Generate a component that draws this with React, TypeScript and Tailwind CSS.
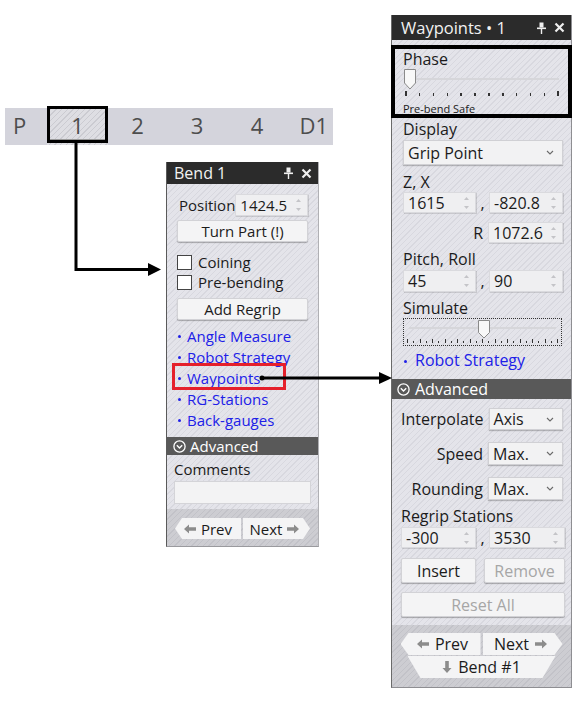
import React from "react";

const hatch =
  "bg-[repeating-linear-gradient(135deg,#e4e4ea_0px,#e4e4ea_3px,#d8d8df_3px,#d8d8df_4px)]";

function Pin() {
  return (
    <svg width="9" height="12" viewBox="0 0 9 12">
      <rect x="2.5" y="0.5" width="4" height="5" fill="#f0f0f0" />
      <rect x="0" y="5.5" width="9" height="1.6" fill="#f0f0f0" />
      <rect x="3.8" y="6" width="1.4" height="6" fill="#f0f0f0" />
    </svg>
  );
}

function Close() {
  return (
    <svg width="11" height="11" viewBox="0 0 11 11">
      <path d="M1.5 1.5 L9.5 9.5 M9.5 1.5 L1.5 9.5" stroke="#f0f0f0" strokeWidth="2.2" />
    </svg>
  );
}

function SpinArrows() {
  return (
    <svg width="7" height="16" viewBox="0 0 7 16" className="shrink-0">
      <path d="M1 5 L3.5 2 L6 5 Z" fill="#c4c4c8" />
      <path d="M1 11 L3.5 14 L6 11 Z" fill="#c4c4c8" />
    </svg>
  );
}

function Chevron() {
  return (
    <svg width="8" height="5" viewBox="0 0 8 5" className="shrink-0">
      <path d="M1 1 L4 4 L7 1" fill="none" stroke="#6a6a6a" strokeWidth="1.1" />
    </svg>
  );
}

function Spin({ value, className = "" }: { value: string; className?: string }) {
  return (
    <div
      className={`flex items-center justify-between bg-[#efeff1] border border-[#dadade] shadow-[1px_1px_0_rgba(0,0,0,0.12)] pl-[4px] pr-[5px] ${className}`}
    >
      <span>{value}</span>
      <SpinArrows />
    </div>
  );
}

function Btn({
  children,
  className = "",
  disabled = false,
}: {
  children: React.ReactNode;
  className?: string;
  disabled?: boolean;
}) {
  return (
    <div
      className={`flex items-center justify-center bg-[#f4f4f5] border border-[#d2d2d6] rounded-[2px] shadow-[0_1px_1px_rgba(0,0,0,0.28)] ${
        disabled ? "text-[#a6a6a6]" : "text-[#1b1b1b]"
      } ${className}`}
    >
      {children}
    </div>
  );
}

function Sel({ value, className = "" }: { value: string; className?: string }) {
  return (
    <div
      className={`flex items-center justify-between bg-[#f2f2f3] border border-[#d0d0d4] shadow-[0_1px_1px_rgba(0,0,0,0.22)] pl-[4px] pr-[8px] ${className}`}
    >
      <span>{value}</span>
      <Chevron />
    </div>
  );
}

function AdvIcon() {
  return (
    <svg width="13" height="13" viewBox="0 0 13 13" className="shrink-0">
      <circle cx="6.5" cy="6.5" r="5.6" fill="none" stroke="#fff" strokeWidth="1.3" />
      <path d="M3.8 5.3 L6.5 8 L9.2 5.3" fill="none" stroke="#fff" strokeWidth="1.4" />
    </svg>
  );
}

function ArrowLeft() {
  return (
    <svg width="12" height="10" viewBox="0 0 12 10" className="shrink-0">
      <path d="M0 5 L5 0.5 V3.2 H12 V6.8 H5 V9.5 Z" fill="#8c8c8c" />
    </svg>
  );
}
function ArrowRight() {
  return (
    <svg width="12" height="10" viewBox="0 0 12 10" className="shrink-0">
      <path d="M12 5 L7 0.5 V3.2 H0 V6.8 H7 V9.5 Z" fill="#8c8c8c" />
    </svg>
  );
}
function ArrowDown() {
  return (
    <svg width="10" height="12" viewBox="0 0 10 12" className="shrink-0">
      <path d="M5 12 L0.5 7 H3.2 V0 H6.8 V7 H9.5 Z" fill="#8c8c8c" />
    </svg>
  );
}

function TabBar() {
  return (
    <div className="absolute left-[5px] top-[108px] w-[328px] h-[37px] bg-[#d4d4dc] flex items-stretch text-[22px] leading-[28px] text-[#4d4d4d]">
      <div className="w-[42px] pl-[8px] flex items-center pb-[3px]">P</div>
      <div className="relative w-[61px] flex items-center justify-center pb-[3px] bg-[repeating-linear-gradient(135deg,#dedee3_0px,#dedee3_3px,#cbcbd1_3px,#cbcbd1_4px)]">
        1
        <div className="absolute left-0 right-0 bottom-[4px] h-[2px] bg-[#9a9a9a]" />
        <div className="absolute left-0 right-0 top-[-2px] bottom-[2px] border-[3px] border-black" />
      </div>
      <div className="w-[59px] flex items-center justify-center pb-[3px]">2</div>
      <div className="w-[60px] flex items-center justify-center pb-[3px]">3</div>
      <div className="w-[60px] flex items-center justify-center pb-[3px]">4</div>
      <div className="flex-1 flex items-center justify-end pr-[5px] pb-[3px]">D1</div>
    </div>
  );
}

function BendPanel() {
  const links = ["Angle Measure", "Robot Strategy", "Waypoints", "RG-Stations", "Back-gauges"];
  return (
    <div className="absolute left-[166px] top-[162px] w-[153px] h-[385px] flex flex-col border-l border-l-[#5a5a5a] border-r border-r-[#b0b0b4] border-b border-b-[#9a9a9e] text-[15px] leading-[20px]">
      <div className="h-[22px] shrink-0 bg-[#2b2b2b] flex items-center justify-between pl-[7px] pr-[6px] text-[#f2f2f2]">
        <span className="text-[16px]">Bend 1</span>
        <div className="flex items-center gap-[8px]">
          <Pin />
          <Close />
        </div>
      </div>
      <div className={`flex-1 flex flex-col ${hatch}`}>
        <div className="px-[10px] flex flex-col">
          <div className="mt-[9px] h-[24px] flex items-center justify-between">
            <span className="pl-[2px]">Position</span>
            <Spin value="1424.5" className="w-[73px] h-[22px]" />
          </div>
          <Btn className="mt-[3px] h-[22px] w-[131px]">Turn Part (!)</Btn>
          <div className="mt-[10px] h-[20px] flex items-center gap-[6px]">
            <div className="w-[15px] h-[15px] bg-white border border-[#444]" />
            <span>Coining</span>
          </div>
          <div className="h-[20px] flex items-center gap-[6px]">
            <div className="w-[15px] h-[15px] bg-white border border-[#444]" />
            <span>Pre-bending</span>
          </div>
          <Btn className="mt-[6px] h-[22px] w-[131px]">Add Regrip</Btn>
          <div className="mt-[5px] flex flex-col">
            {links.map((l) => (
              <div key={l} className="h-[21px] flex items-center text-[#2020e8]">
                <div className="ml-[1px] mr-[6px] w-[3px] h-[3px] rounded-full bg-[#2020e8] mt-[2px]" />
                <span>{l}</span>
              </div>
            ))}
          </div>
        </div>
        <div className="mt-[7px] h-[18px] bg-[#595959] text-white flex items-center gap-[4px] pl-[6px]">
          <AdvIcon />
          <span>Advanced</span>
        </div>
        <div className="px-[7px] flex flex-col">
          <div className="mt-[4px] h-[20px] flex items-center">Comments</div>
          <div className="mt-[2px] h-[23px] bg-[#f3f3f4] border border-[#d4d4d8]" />
        </div>
        <div className="mt-[5px] flex-1 bg-[repeating-linear-gradient(135deg,#cdcdd2_0px,#cdcdd2_3px,#c2c2c8_3px,#c2c2c8_4px)] pt-[9px] flex justify-center gap-[2px]">
          <div className="h-[21px] w-[66px] bg-[#f4f4f5] flex items-center justify-center gap-[5px] [clip-path:polygon(7px_0,100%_0,100%_100%,7px_100%,0_50%)]">
            <ArrowLeft />
            <span>Prev</span>
          </div>
          <div className="h-[21px] w-[67px] bg-[#f4f4f5] flex items-center justify-center gap-[5px] pr-[4px] [clip-path:polygon(0_0,calc(100%-7px)_0,100%_50%,calc(100%-7px)_100%,0_100%)]">
            <span>Next</span>
            <ArrowRight />
          </div>
        </div>
      </div>
    </div>
  );
}

function WaypointsPanel() {
  const ticks12 = Array.from({ length: 12 }, (_, i) => i);
  const ticks25 = Array.from({ length: 25 }, (_, i) => i);
  return (
    <div className="absolute left-[391px] top-[15px] w-[181px] h-[673px] flex flex-col border-l border-l-[#6a6a6a] border-r border-r-[#8e8e92] border-b border-b-[#8e8e92] text-[16px] leading-[20px]">
      <div className="h-[25px] shrink-0 bg-[#2b2b2b] flex items-center justify-between pl-[9px] pr-[6px] text-[#f2f2f2]">
        <span className="text-[16.5px]">Waypoints • 1</span>
        <div className="flex items-center gap-[8px]">
          <Pin />
          <Close />
        </div>
      </div>
      <div className={`flex-1 flex flex-col ${hatch}`}>
        <div className="px-[11px] pr-[8px] flex flex-col">
          {/* Phase */}
          <div className="h-[78px] flex flex-col">
            <div className="mt-[9px] h-[20px] flex items-center">Phase</div>
            <div className="relative h-[21px]">
              <div className="absolute left-[2px] right-[4px] top-[9px] h-[2px] bg-[#d6d6da]" />
              <svg width="12" height="21" viewBox="0 0 12 21" className="absolute left-[1px] top-0">
                <path d="M0.5 0.5 H11.5 V14 L6 20 L0.5 14 Z" fill="#f8f8f8" stroke="#8a8a8a" strokeWidth="1" />
              </svg>
            </div>
            <div className="h-[6px] flex justify-between items-end pl-[2px] pr-[4px]">
              {ticks12.map((i) => (
                <div
                  key={i}
                  className={`w-[1.5px] bg-[#333] ${i === 0 || i === 11 ? "h-[5px]" : "h-[3px]"}`}
                />
              ))}
            </div>
            <div className="mt-[6px] h-[14px] text-[11px] leading-[14px]">Pre-bend Safe</div>
          </div>
          {/* Display */}
          <div className="mt-[1px] h-[20px] flex items-center">Display</div>
          <Sel value="Grip Point" className="mt-[1px] h-[25px] w-[160px]" />
          <div className="mt-[7px] h-[20px] flex items-center">Z, X</div>
          <div className="h-[21px] flex items-center">
            <Spin value="1615" className="w-[73px] h-[21px]" />
            <span className="w-[13px] text-center">,</span>
            <Spin value="-820.8" className="w-[74px] h-[21px]" />
          </div>
          <div className="mt-[9px] h-[21px] flex items-center justify-end gap-[5px] pr-[0px]">
            <span>R</span>
            <Spin value="1072.6" className="w-[75px] h-[21px]" />
          </div>
          <div className="mt-[6px] h-[20px] flex items-center">Pitch, Roll</div>
          <div className="mt-[1px] h-[22px] flex items-center">
            <Spin value="45" className="w-[73px] h-[22px]" />
            <span className="w-[13px] text-center">,</span>
            <Spin value="90" className="w-[74px] h-[22px]" />
          </div>
          <div className="mt-[6px] h-[20px] flex items-center">Simulate</div>
          <div className="relative h-[28px] w-[159px] border border-dotted border-[#333]">
            <div className="absolute left-[5px] right-[5px] top-[8px] h-[2px] bg-[#d6d6da]" />
            <svg width="12" height="19" viewBox="0 0 12 19" className="absolute left-[74px] top-[1px]">
              <path d="M0.5 0.5 H11.5 V12.5 L6 18 L0.5 12.5 Z" fill="#f8f8f8" stroke="#8a8a8a" strokeWidth="1" />
            </svg>
            <div className="absolute left-[3px] right-[3px] bottom-[2px] h-[4px] flex justify-between items-end">
              {ticks25.map((i) => (
                <div key={i} className={`w-[1px] bg-[#333] ${i % 2 === 0 ? "h-[4px]" : "h-[2px]"}`} />
              ))}
            </div>
          </div>
          <div className="mt-[4px] h-[20px] flex items-center text-[#2020e8]">
            <div className="ml-[1px] mr-[8px] w-[3px] h-[3px] rounded-full bg-[#2020e8] mt-[2px]" />
            <span>Robot Strategy</span>
          </div>
        </div>
        <div className="mt-[9px] h-[20px] bg-[#595959] text-white flex items-center gap-[5px] pl-[5px]">
          <AdvIcon />
          <span>Advanced</span>
        </div>
        <div className="pl-[9px] pr-[6px] flex flex-col">
          <div className="mt-[9px] h-[22px] flex items-center justify-end gap-[5px] pr-[2px]">
            <span>Interpolate</span>
            <Sel value="Axis" className="w-[75px] h-[22px]" />
          </div>
          <div className="mt-[12px] h-[23px] flex items-center justify-end gap-[5px] pr-[2px]">
            <span>Speed</span>
            <Sel value="Max." className="w-[75px] h-[23px]" />
          </div>
          <div className="mt-[12px] h-[23px] flex items-center justify-end gap-[5px] pr-[2px]">
            <span>Rounding</span>
            <Sel value="Max." className="w-[75px] h-[23px]" />
          </div>
          <div className="mt-[6px] h-[20px] flex items-center">Regrip Stations</div>
          <div className="mt-[1px] h-[21px] flex items-center">
            <Spin value="-300" className="w-[75px] h-[21px]" />
            <span className="w-[13px] text-center">,</span>
            <Spin value="3530" className="w-[76px] h-[21px]" />
          </div>
          <div className="mt-[10px] h-[25px] flex items-center gap-[8px]">
            <Btn className="w-[75px] h-[25px]">Insert</Btn>
            <Btn className="w-[81px] h-[25px]" disabled>
              Remove
            </Btn>
          </div>
          <Btn className="mt-[9px] w-[164px] h-[25px]" disabled>
            Reset All
          </Btn>
        </div>
        <div className="mt-[8px] flex-1 bg-[repeating-linear-gradient(135deg,#cdcdd2_0px,#cdcdd2_3px,#c2c2c8_3px,#c2c2c8_4px)] pt-[8px] flex flex-col items-center">
          <div className="flex gap-[2px]">
            <div className="h-[22px] w-[80px] bg-[#f4f4f5] flex items-center justify-center gap-[6px] pl-[4px] [clip-path:polygon(8px_0,100%_0,100%_100%,8px_100%,0_50%)]">
              <ArrowLeft />
              <span>Prev</span>
            </div>
            <div className="h-[22px] w-[80px] bg-[#f4f4f5] flex items-center justify-center gap-[6px] pr-[4px] [clip-path:polygon(0_0,calc(100%-8px)_0,100%_50%,calc(100%-8px)_100%,0_100%)]">
              <span>Next</span>
              <ArrowRight />
            </div>
          </div>
          <div className="mt-[1px] h-[22px] w-[148px] bg-[#f4f4f5] flex items-center justify-center gap-[6px] [clip-path:polygon(0_0,100%_0,calc(100%-13px)_100%,13px_100%)]">
            <ArrowDown />
            <span>Bend #1</span>
          </div>
        </div>
      </div>
    </div>
  );
}

function Overlays() {
  return (
    <>
      <div className="absolute left-[172px] top-[363px] w-[114px] h-[27px] border-[3px] border-[#e5202b]" />
      <div className="absolute left-[391px] top-[45px] w-[181px] h-[73px] border-[4px] border-black" />
      <svg width="584" height="705" viewBox="0 0 584 705" className="absolute left-0 top-0 pointer-events-none">
        <path d="M76 143 V269.5 H150" fill="none" stroke="#000" strokeWidth="3" />
        <polygon points="148,263 161,269.5 148,276" fill="#000" />
        <circle cx="262" cy="378" r="2.5" fill="#000" />
        <path d="M262 378 H381" fill="none" stroke="#000" strokeWidth="3" />
        <polygon points="379,372 392,378 379,384" fill="#000" />
      </svg>
    </>
  );
}

export default function App() {
  return (
    <div className="relative w-[584px] h-[705px] bg-white overflow-hidden font-['Open_Sans',sans-serif] text-[#1b1b1b]">
      <TabBar />
      <BendPanel />
      <WaypointsPanel />
      <Overlays />
    </div>
  );
}
